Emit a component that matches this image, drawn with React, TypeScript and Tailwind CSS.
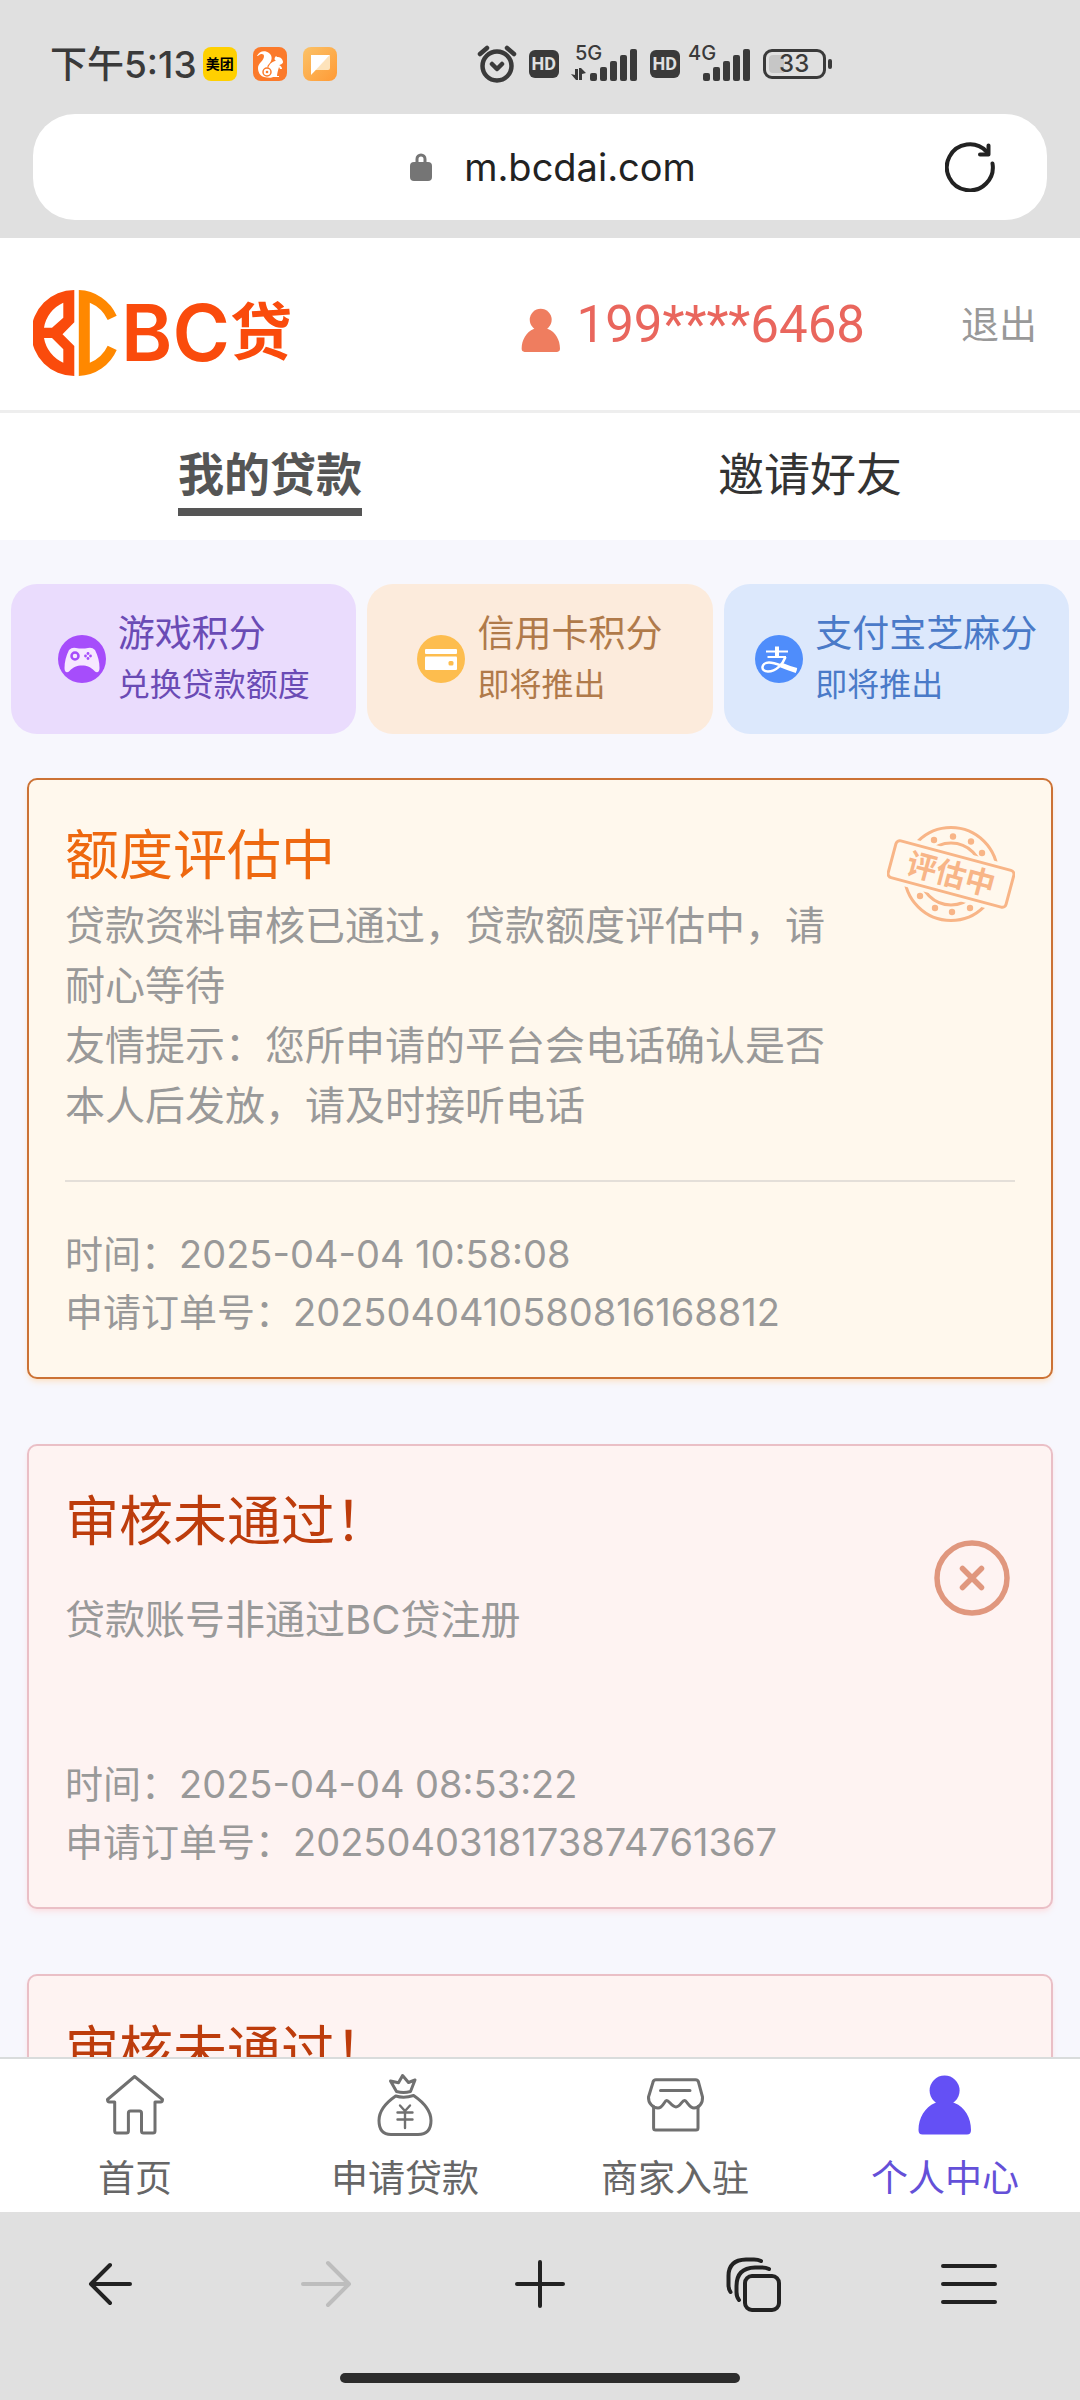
import type { ReactNode } from 'react'

interface LoanOrder {
  status: 'evaluating' | 'rejected'
  title: string
  lines: string[]
  time?: string
  orderNo?: string
}

const ORDERS: LoanOrder[] = [
  {
    status: 'evaluating',
    title: '额度评估中',
    lines: [
      '贷款资料审核已通过，贷款额度评估中，请耐心等待',
      '友情提示：您所申请的平台会电话确认是否本人后发放，请及时接听电话',
    ],
    time: '2025-04-04 10:58:08',
    orderNo: '2025040410580816168812',
  },
  {
    status: 'rejected',
    title: '审核未通过！',
    lines: ['贷款账号非通过BC贷注册'],
    time: '2025-04-04 08:53:22',
    orderNo: '2025040318173874761367',
  },
  {
    status: 'rejected',
    title: '审核未通过！',
    lines: [],
  },
]

const POINTS = [
  { title: '游戏积分', note: '兑换贷款额度', style: 'bg-[#eadcfd] text-[#6a4bb5]', icon: <GameIcon /> },
  { title: '信用卡积分', note: '即将推出', style: 'bg-[#fcebdc] text-[#b07a4a]', icon: <CreditIcon /> },
  { title: '支付宝芝麻分', note: '即将推出', style: 'bg-[#dce8fc] text-[#4a7ac8]', icon: <AlipayIcon /> },
]

const NAV = [
  { label: '首页', icon: <HomeIcon />, active: false },
  { label: '申请贷款', icon: <BagIcon />, active: false },
  { label: '商家入驻', icon: <ShopIcon />, active: false },
  { label: '个人中心', icon: <PersonIcon className="h-[63px] w-[62px] text-[#6450f5]" />, active: true },
]

/* ---------- status bar ---------- */

function SquirrelIcon() {
  return (
    <svg viewBox="0 0 34 34" className="size-[34px]">
      <rect width="34" height="34" rx="8" fill="#fb7a2b" />
      <path
        d="M4 9C6 4 12 3 16 6c4 3 3 8 0 11-2 2-2 3-1 4 2-5 5-7 8-7-2-1-2-3 0-5 1 1 1 1 2 1 3 0 5 3 5 5s-3 3-4 3c2 1 3 2 3 4l-2 0-1-2c-1 3-2 7-2 9h2v1h-6c-1 1-5 1-9 0-4-1-6-5-6-9 0-5 6-7 6-12 0-2-3-3-6 0z"
        fill="#fff"
      />
      <circle cx="14" cy="25" r="4" fill="none" stroke="#fb7a2b" strokeWidth="1.5" />
      <circle cx="14" cy="25" r="1.3" fill="#fb7a2b" />
    </svg>
  )
}

function NoteIcon() {
  return (
    <svg viewBox="0 0 34 34" className="size-[34px]">
      <defs>
        <linearGradient id="note" x1="0" y1="0" x2="1" y2="1">
          <stop offset="0" stopColor="#fbc268" />
          <stop offset="1" stopColor="#ff9a35" />
        </linearGradient>
      </defs>
      <rect width="34" height="34" rx="8" fill="url(#note)" />
      <path d="M27 8v13a2 2 0 0 1-2 2H12z" fill="#fde3bb" />
      <path d="M8 8h19L8 28z" fill="#fff" />
    </svg>
  )
}

function AlarmIcon() {
  return (
    <svg viewBox="0 0 40 38" className="h-[38px] w-10" fill="none" stroke="#3a3a3a" strokeWidth="4.5" strokeLinecap="round" strokeLinejoin="round">
      <circle cx="20" cy="21" r="14.5" />
      <path d="M15 19l5 5 5-5M3 9l7-6M37 9l-7-6" />
    </svg>
  )
}

function HdBadge() {
  return (
    <span className="flex h-7 w-[30px] items-center justify-center rounded-md bg-[#3a3a3a] font-['Roboto'] text-lg leading-none font-bold text-[#e0e0e0]">
      HD
    </span>
  )
}

function Signal({ label, data }: { label: string; data?: boolean }) {
  return (
    <svg viewBox={data ? '0 -8 67 54' : '4 -8 63 54'} className={data ? 'h-[54px] w-[67px]' : 'h-[54px] w-[63px]'} fill="#3a3a3a">
      <text x="4" y="15" fontSize="20" fontWeight="500">
        {label}
      </text>
      {data && <path d="M0 29l5 6h2V24H4v6zM15 28l-5-5H8v12h3v-6z" />}
      <rect x="19" y="28" width="7" height="8" rx="2" />
      <rect x="29" y="22" width="7" height="14" rx="2" />
      <rect x="39" y="16" width="7" height="20" rx="2" />
      <rect x="49" y="10" width="7" height="26" rx="2" />
      <rect x="59" y="4" width="7" height="32" rx="2" />
    </svg>
  )
}

function Battery() {
  return (
    <span className="flex items-center gap-0.5">
      <span className="flex h-[30px] w-[63px] rounded-[9px] border-[3px] border-[#3a3a3a] p-[3px]">
        <span className="flex flex-1 items-center justify-center rounded-sm bg-linear-to-r from-[#c6c6c6] from-30% to-transparent to-30% text-2xl leading-none font-medium">
          33
        </span>
      </span>
      <span className="h-2.5 w-1 rounded-sm bg-[#3a3a3a]" />
    </span>
  )
}

function StatusBar() {
  return (
    <div className="flex h-[114px] shrink-0 items-center pt-3.5 pl-[50px] text-[#3a3a3a]">
      <span className="text-[37px] leading-none font-medium">下午5:13</span>
      <span className="ml-1.5 flex gap-4">
        <span className="flex size-[34px] items-center justify-center rounded-lg bg-[#ffd000] text-sm font-bold whitespace-nowrap text-black">
          美团
        </span>
        <SquirrelIcon />
        <NoteIcon />
      </span>
      <span className="ml-[140px] flex items-center gap-3">
        <AlarmIcon />
        <span className="flex items-center gap-3">
          <HdBadge />
          <Signal label="5G" data />
        </span>
        <span className="flex items-center gap-2">
          <HdBadge />
          <Signal label="4G" />
        </span>
        <Battery />
      </span>
    </div>
  )
}

/* ---------- site header ---------- */

function Logo() {
  return (
    <a href="#" className="mt-[18px] flex items-center gap-1 text-[#fa4b0c]">
      <svg viewBox="0 0 84 86" className="h-[86px] w-[84px]">
        <path
          fillRule="evenodd"
          fill="#fa4b0c"
          d="M41.3 0A43 43 0 0 0 41.3 86V56L29.5 44.3 41.3 32.3zM30.3 12.7V27.7L19 37.7H11A33 33 0 0 1 30.3 12.7zM11 48H19L30.3 59.3V72.7A33 33 0 0 1 11 48z"
        />
        <path
          fill="#ff8800"
          d="M45.8 0A43 43 0 0 1 83.7 25.7L74.7 30A34 34 0 0 0 56.8 12.7V72.7A34 34 0 0 0 74.7 55.7L83.7 60A43 43 0 0 1 45.8 86z"
        />
      </svg>
      <span className="flex items-center leading-none">
        <span className="text-[78px] font-semibold">BC</span>
        <span className="text-[62px] font-bold">贷</span>
      </span>
    </a>
  )
}

function PersonIcon({ className }: { className: string }) {
  return (
    <svg viewBox="0 0 62 63" className={className} fill="currentColor">
      <circle cx="30.6" cy="17.5" r="15" />
      <path d="M24 26h13.5q0 3 3 4C51 34 57 45 57 57q0 4.5-4 4.5H8.5q-4 0-4-4.5C4.5 45 11 34 21 30q3-1 3-4z" />
    </svg>
  )
}

/* ---------- points cards ---------- */

function GameIcon() {
  return (
    <svg viewBox="0 0 48 48" className="size-12 shrink-0">
      <circle cx="24" cy="24" r="24" fill="#a64dfb" />
      <path
        d="M11 15q3-3 7-2 6 1 12 0 4-1 7 2c3 6 4.5 12 4.5 18 0 5-3 5-5 3-4-4-7-5.5-12.5-5.5S15.5 32 11.5 36c-2 2-5 2-5-3 0-6 1.5-12 4.5-18z"
        fill="#f6e8ff"
      />
      <circle cx="17" cy="21" r="3.5" fill="none" stroke="#a64dfb" strokeWidth="2.5" />
      <g fill="#a64dfb">
        <circle cx="30" cy="18.5" r="1.4" />
        <circle cx="30" cy="23.5" r="1.4" />
        <circle cx="27.5" cy="21" r="1.4" />
        <circle cx="32.5" cy="21" r="1.4" />
      </g>
    </svg>
  )
}

function CreditIcon() {
  return (
    <svg viewBox="0 0 48 48" className="size-12 shrink-0">
      <circle cx="24" cy="24" r="24" fill="#fdbd4e" />
      <rect x="8" y="14" width="32" height="5" rx="1" fill="#fff" />
      <rect x="8" y="21.5" width="32" height="13.5" rx="1" fill="#fff" />
      <rect x="31.5" y="26" width="5" height="4.5" rx="1.5" fill="#fdbd4e" />
    </svg>
  )
}

function AlipayIcon() {
  return (
    <svg viewBox="0 0 48 48" className="size-12 shrink-0" fill="none" stroke="#fff">
      <circle cx="24" cy="24" r="24" fill="#4f8dfb" stroke="none" />
      <path d="M11 16.5H33M12.5 22H31" strokeWidth="2.2" />
      <path d="M22 11.5V22" strokeWidth="4" />
      <path d="M30.5 22C28 29 21 36.5 13 36.5 5 36.5 6 27.5 14 27.5c8 0 14 5 27.5 7.5" strokeWidth="2.5" />
      <path d="M26 30q7 3 15.5 5.5" strokeWidth="5" />
    </svg>
  )
}

/* ---------- loan order cards ---------- */

function Stamp() {
  return (
    <svg viewBox="0 0 128 97" className="mt-2 h-[97px] w-32 shrink-0" fill="none" stroke="#f8b587" strokeWidth="3">
      <circle cx="64" cy="48" r="46.5" />
      <circle cx="64" cy="48" r="31" />
      <g fill="#f8b587" stroke="none">
        <circle cx="47" cy="14" r="3.2" />
        <circle cx="66" cy="10.5" r="3.2" />
        <circle cx="84" cy="15.5" r="3.2" />
        <circle cx="95" cy="27" r="3.2" />
        <circle cx="33" cy="70" r="3.2" />
        <circle cx="48" cy="82" r="3.2" />
        <circle cx="65" cy="86" r="3.2" />
        <circle cx="83" cy="82" r="3.2" />
      </g>
      <g transform="rotate(15 64 48)">
        <rect x="1" y="24" width="126" height="48" fill="#fff8ed" stroke="none" />
        <rect x="3" y="29" width="122" height="38" rx="4" />
        <text x="64" y="59" textAnchor="middle" fontSize="30" fontWeight="700" fill="#f8b587" stroke="none">
          评估中
        </text>
      </g>
    </svg>
  )
}

function RejectedIcon() {
  return (
    <svg viewBox="0 0 76 76" className="mt-14 mr-[5px] size-[76px] shrink-0" fill="none" stroke="#e0977e" strokeWidth="5.5" strokeLinecap="round">
      <circle cx="38" cy="38" r="35" />
      <path d="M28.5 28.5l19 19M47.5 28.5l-19 19" />
    </svg>
  )
}

function OrderCard({ order }: { order: LoanOrder }) {
  const evaluating = order.status === 'evaluating'
  return (
    <article
      className={`rounded-[10px] border-2 px-9 pt-[38px] pb-9 shadow-md ${
        evaluating
          ? 'border-[#cc7235] bg-[#fff8ed] shadow-orange-200/50'
          : 'border-[#eabfc6] bg-[#fef3f2] shadow-red-200/40'
      }`}
    >
      <div className="flex items-start gap-10">
        <div className="flex-1">
          <h2 className={`text-[54px] leading-[76px] ${evaluating ? 'text-[#ee680f]' : 'text-[#bd3c0c]'}`}>
            {order.title}
          </h2>
          <div className={`text-[40px] leading-[60px] ${evaluating ? 'mt-0.5' : 'mt-[30px]'}`}>
            {order.lines.map((line) => (
              <p key={line}>{line}</p>
            ))}
          </div>
        </div>
        {evaluating && <Stamp />}
        {!evaluating && order.time && <RejectedIcon />}
      </div>
      {evaluating && <hr className="mt-11 border-t-2 border-[#e4dfd9]" />}
      {order.time && (
        <div className={`text-[38px] leading-[58px] ${evaluating ? 'mt-[43px]' : 'mt-[105px]'}`}>
          <p>时间：{order.time}</p>
          <p>申请订单号：{order.orderNo}</p>
        </div>
      )}
    </article>
  )
}

/* ---------- bottom navigation ---------- */

function LineIcon({ children }: { children: ReactNode }) {
  return (
    <svg viewBox="0 0 62 63" className="h-[63px] w-[62px]" fill="none" stroke="#707070" strokeWidth="3" strokeLinejoin="round" strokeLinecap="round">
      {children}
    </svg>
  )
}

function HomeIcon() {
  return (
    <LineIcon>
      <path d="M30.6 3.5L3.5 26.5q0 2.5 2 2.5H10.7V58q0 2 2 2H22.4q2 0 2-2V40q0-2 2-2H35.5q2 0 2 2V58q0 2 2 2H49q2 0 2-2V29h5.5q2 0 2-2.5z" />
    </LineIcon>
  )
}

function BagIcon() {
  return (
    <LineIcon>
      <path d="M16.5 8L22.5 18.5Q29.5 20.5 36.5 18.5L41 7 34.5 9.5 28.6 2.5 24.5 9.8z" />
      <path d="M21.7 23Q30 25.5 39.6 22.5C49 29 57 37 57 47.5 57 57 53 61.5 44 61.5H17C9 61.5 5 57 5 47.5 5 38 13 29 21.7 23z" />
      <path d="M26 32.5L31 38 36 32.5M23.5 39.5H38.5M23.5 46.5H38.5M31 38V55" strokeWidth="2.4" />
    </LineIcon>
  )
}

function ShopIcon() {
  return (
    <LineIcon>
      <path d="M12 6.7H51.5q2.5 0 3 2.5L58.5 24C59 30 55 35 50 35 45 35 43 27.5 40.5 27.5S36 34 32 34 25 27.5 22.7 27.5 19 35 14 35 4 30 4.5 24L9 9.2q.5-2.5 3-2.5zM16.5 17.5H46" />
      <path d="M9.6 33.5V55q0 2 2 2H52q2 0 2-2V33.5" />
    </LineIcon>
  )
}

/* ---------- browser toolbar ---------- */

function ToolButton({ label, disabled, children }: { label: string; disabled?: boolean; children: ReactNode }) {
  return (
    <button aria-label={label} disabled={disabled} className="flex flex-1 justify-center text-[#222] disabled:text-[#bdbdbd]">
      <svg viewBox="0 0 56 56" className="size-14" fill="none" stroke="currentColor" strokeWidth="4" strokeLinecap="round" strokeLinejoin="round">
        {children}
      </svg>
    </button>
  )
}

export default function App() {
  return (
    <div className="flex h-screen flex-col overflow-hidden bg-[#e0e0e0] font-['Inter','Noto_Sans_CJK_SC',sans-serif]">
      <StatusBar />
      <div className="mx-[33px] mb-[18px] flex h-[106px] shrink-0 items-center rounded-[42px] bg-white pr-[52px] pl-32">
        <label className="flex flex-1 items-center justify-center gap-8">
          <svg viewBox="0 0 22 28" className="h-7 w-[22px]">
            <rect y="9" width="22" height="19" rx="4" fill="#757575" />
            <path d="M7 11V6a4 4 0 0 1 8 0v5" fill="none" stroke="#757575" strokeWidth="3" />
          </svg>
          <input
            aria-label="网址"
            defaultValue="m.bcdai.com"
            className="field-sizing-content bg-transparent text-[38px] leading-none text-[#222] outline-none"
          />
        </label>
        <button aria-label="刷新">
          <svg viewBox="0 0 50 50" className="size-[50px]" fill="none" stroke="#222" strokeWidth="4" strokeLinecap="round" strokeLinejoin="round">
            <path d="M47.5 21.5A23 23 0 1 1 41.5 9.5" />
            <path d="M43.5 3.5V12.5H35" />
          </svg>
        </button>
      </div>

      <header className="flex h-[175px] shrink-0 items-center justify-between border-b-[3px] border-[#eee] bg-white pr-[43px] pl-[33px]">
        <Logo />
        <div className="flex items-center gap-24">
          <span className="flex items-center gap-3 font-['Roboto',sans-serif] text-[51px] leading-none text-[#e9665d]">
            <PersonIcon className="mt-3 size-[46px] text-[#ef7d5f]" />
            199****6468
          </span>
          <button className="text-[38px] leading-none text-[#999]">退出</button>
        </div>
      </header>

      <nav className="flex shrink-0 bg-white pb-6 text-[46px] leading-[62px]">
        <div className="flex flex-1 justify-center">
          <button className="border-b-8 border-[#555] pt-[30px] pb-[3px] font-bold text-[#555]">我的贷款</button>
        </div>
        <div className="flex flex-1 justify-center">
          <button className="border-b-8 border-transparent pt-[30px] pb-[3px] text-[#333]">邀请好友</button>
        </div>
      </nav>

      <main className="min-h-0 flex-1 overflow-hidden bg-[#f7f7fd] pt-11">
        <div className="flex gap-[11px] px-[11px]">
          {POINTS.map((p) => (
            <a key={p.title} href="#" className={`flex flex-1 items-center justify-center gap-3 rounded-[26px] py-6 ${p.style}`}>
              {p.icon}
              <span className="flex flex-col whitespace-nowrap">
                <span className="text-[37px] leading-[51px]">{p.title}</span>
                <span className="text-[32px] leading-[51px]">{p.note}</span>
              </span>
            </a>
          ))}
        </div>
        <div className="flex flex-col gap-[65px] px-[27px] pt-11 text-[#999]">
          {ORDERS.map((order, i) => (
            <OrderCard key={i} order={order} />
          ))}
        </div>
      </main>

      <nav className="flex shrink-0 border-t-2 border-[#d9dcdc] bg-white pt-3.5 pb-2">
        {NAV.map((item) => (
          <a
            key={item.label}
            href="#"
            className={`flex flex-1 flex-col items-center gap-[18px] text-[37px] leading-[50px] ${
              item.active ? 'text-[#6450d8]' : 'text-[#666]'
            }`}
          >
            {item.icon}
            {item.label}
          </a>
        ))}
      </nav>

      <div className="flex shrink-0 px-1 pt-11">
        <ToolButton label="后退">
          <path d="M47 28H8M27 9L8 28 27 47" />
        </ToolButton>
        <ToolButton label="前进" disabled>
          <path d="M5 28H51M30 7L51 28 30 49" />
        </ToolButton>
        <ToolButton label="新建标签页">
          <path d="M28 6V50M5 28H51" />
        </ToolButton>
        <ToolButton label="标签页">
          <rect x="19" y="20" width="34" height="34" rx="7" />
          <path d="M43 13Q40 11.5 36 11.5H29Q10.5 12 10.5 30V36Q10.5 41 13 44" />
          <path d="M35 5Q32 3.5 28 3.5H20Q2.5 4 2.5 20V29Q2.5 33 4.5 36" />
        </ToolButton>
        <ToolButton label="菜单">
          <path d="M2 10H54M2 28H54M2 46H54" />
        </ToolButton>
      </div>
      <div className="mx-auto mt-[61px] mb-[17px] h-2.5 w-[400px] shrink-0 rounded-full bg-[#2c2c2c]" />
    </div>
  )
}
